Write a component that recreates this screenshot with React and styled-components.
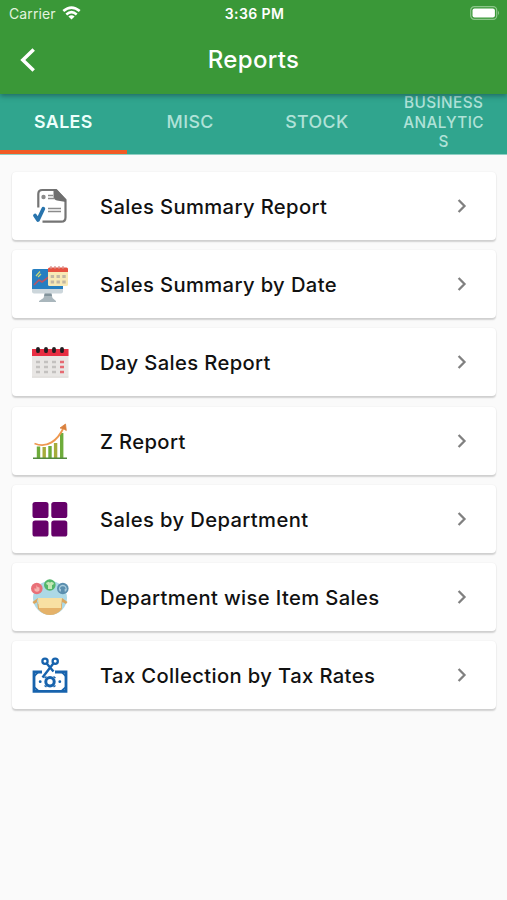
import React from 'react'
import styled, { createGlobalStyle } from 'styled-components'

const colors = {
	green: '#3a9838',
	teal: '#30a58e',
	orange: '#f15a24',
	page: '#fafafa',
	text: '#111111',
	grey: '#808080',
}

const GlobalStyle = createGlobalStyle`
	* {
		box-sizing: border-box;
	}
	body {
		margin: 0;
		background: ${colors.page};
		font-family: Inter, 'Liberation Sans', sans-serif;
	}
`

const Screen = styled.div`
	width: 507px;
	height: 900px;
	overflow: hidden;
	background: ${colors.page};
`
const Header = styled.header`
	position: relative;
	z-index: 1;
	height: 94px;
	background: ${colors.green};
	box-shadow: 0 2px 5px rgba(20, 60, 70, 0.55);
`
const StatusBar = styled.div`
	display: grid;
	grid-template-columns: 1fr auto 1fr;
	align-items: center;
	height: 26px;
	padding: 0 7px 0 9px;
	color: #ffffff;
`
const Carrier = styled.div`
	display: flex;
	align-items: center;
	gap: 6px;
	font-size: 14px;
	letter-spacing: 0.1px;
	color: #e2f3df;
`
const Clock = styled.div`
	padding-top: 1px;
	font-size: 14px;
	font-weight: 600;
	letter-spacing: 0.4px;
`
const BatteryIcon = styled.svg`
	justify-self: end;
`
const TitleBar = styled.div`
	display: grid;
	grid-template-columns: 60px 1fr 60px;
	align-items: center;
	height: 67px;
`
const BackButton = styled.button`
	display: flex;
	padding: 0 0 0 18px;
	border: 0;
	background: none;
`
const Title = styled.h1`
	margin: 0;
	font-size: 24px;
	font-weight: 500;
	letter-spacing: 0.3px;
	text-align: center;
	color: #ffffff;
`

const Tabs = styled.nav`
	display: grid;
	grid-template-columns: repeat(4, 1fr);
	grid-template-rows: 60px;
	height: 61px;
	background: ${colors.teal};
	border-bottom: 1px solid #8fcfc3;
`
const Tab = styled.div`
	display: flex;
	align-items: center;
	justify-content: center;
	padding: ${props => props.$small ? '1px 22px 0' : '0'};
	border-bottom: 4px solid ${props => props.$active ? colors.orange : 'transparent'};
	font-size: ${props => props.$small ? '15.3px' : '17.8px'};
	font-weight: ${props => props.$active ? 600 : 500};
	line-height: 19.5px;
	letter-spacing: 0.4px;
	text-align: center;
	overflow-wrap: anywhere;
	color: ${props => props.$active ? '#ecfffb' : '#b0e2d8'};
`

const List = styled.main`
	display: flex;
	flex-direction: column;
	gap: 10.2px;
	padding: 17px 11px 0 12px;
`
const Card = styled.div`
	display: flex;
	align-items: center;
	height: 68px;
	padding: 0 29px 0 8px;
	border-radius: 4px;
	background: #ffffff;
	box-shadow: 0 1.5px 1.5px rgba(0, 0, 0, 0.16), 0 0 2px rgba(0, 0, 0, 0.06);
`
const ReportIcon = styled.svg`
	flex: none;
	width: 60px;
	height: 52px;
`
const Label = styled.span`
	flex: 1;
	padding: 1px 0 0 20px;
	font-size: 20.2px;
	font-weight: 500;
	letter-spacing: 0.38px;
	white-space: nowrap;
	color: ${colors.text};
`

const SummaryIcon = () => (
	<ReportIcon viewBox='0 0 60 52'>
		<path d='M18.3 27.5V14Q18.3 10 22.3 10H36L45.5 20V37.5Q45.5 41.7 41.3 41.7H22.5' fill='none' stroke='#747474' strokeWidth='2.2' />
		<path d='M33.5 9.5H37L46 19.5V22L37 20.5Q33.5 19.5 33.5 16.5Z' fill='#6e6e6e' />
		<circle cx='23.5' cy='17' r='2.2' fill='#8b8b8b' />
		<path d='M28 15.5H33M28 18.5H34.5M28 28.5H41M28 31.5H41' stroke='#8b8b8b' strokeWidth='1.3' />
		<path d='M15 35.5L18 40L23.3 28.8' fill='none' stroke='#2874ad' strokeWidth='3.8' strokeLinecap='round' strokeLinejoin='round' />
	</ReportIcon>
)

const DateIcon = () => (
	<ReportIcon viewBox='0 0 60 52'>
		<path d='M25 34H31L32.5 40L36 43V44H19V43L23.5 40Z' fill='#a9b6bc' />
		<path d='M25 34H31L32 38H24.2Z' fill='#82939b' />
		<rect x='12' y='11' width='31' height='24.5' rx='2' fill='#ccd6db' />
		<path d='M14 11H43V31H12V13Q12 11 14 11Z' fill='#267fc1' />
		<path d='M14 27L19 22L22 24L30 18' fill='none' stroke='#b85465' strokeWidth='1.6' />
		<path d='M16 18L20 13.5M18 19L21 16' stroke='#c9d979' strokeWidth='1.2' />
		<rect x='28' y='10' width='20' height='18' rx='1.5' fill='#f8e9b6' />
		<path d='M28 14V11Q28 9.5 29.5 9.5H46.5Q48 9.5 48 11V14Z' fill='#e65140' />
		<path d='M31 8V11M35 8V11M39 8V11M43 8V11' stroke='#d88d87' strokeWidth='1.2' />
		<path d='M30.7 18.5H46M30.7 24H46' stroke='#c2b7a4' strokeWidth='3' strokeDasharray='3.4 2.4' />
	</ReportIcon>
)

const CalendarIcon = () => (
	<ReportIcon viewBox='0 0 60 52'>
		<rect x='12' y='13' width='36.5' height='28' fill='#e8e6e4' />
		<path d='M12 41.2H48.5' stroke='#d8d5d3' />
		<rect x='12' y='13' width='36.5' height='7' fill='#e72e42' />
		<path d='M18 12.8V15.2M26 12.8V15.2M34 12.8V15.2M42 12.8V15.2' stroke='#211d20' strokeWidth='3.8' strokeLinecap='round' />
		<path d='M16 26H40M16 31H40M16 36H40' stroke='#c3c1bf' strokeWidth='2.6' strokeDasharray='4 4' />
		<path d='M40 26H44M40 31H44M40 36H44' stroke='#e66a72' strokeWidth='2.6' />
	</ReportIcon>
)

const GrowthIcon = () => (
	<ReportIcon viewBox='0 0 60 52'>
		<path d='M18.5 43V31.5M30 43V31M41.7 43V18' stroke='#6eac3b' strokeWidth='3.4' />
		<path d='M24.2 43V32M35.6 43V28' stroke='#a6ac3b' strokeWidth='3.4' />
		<path d='M13 43.2H47' stroke='#53893d' strokeWidth='1.4' />
		<path d='M14.5 28.5C27 33.5 37.5 26 44 12' fill='none' stroke='#ee9850' strokeWidth='1.8' />
		<path d='M40 13L45.5 9L46.3 15.5L43.5 13.7Z' fill='#d9803e' stroke='#d9803e' strokeWidth='0.8' />
	</ReportIcon>
)

const DepartmentIcon = () => (
	<ReportIcon viewBox='0 0 60 52' fill='#650069'>
		<rect x='12.5' y='9' width='16' height='16' rx='2.6' />
		<rect x='31.3' y='9' width='16' height='16' rx='2.6' />
		<rect x='12.5' y='27.5' width='16' height='16' rx='2.6' />
		<rect x='31.3' y='27.5' width='16' height='16' rx='2.6' />
	</ReportIcon>
)

const BasketIcon = () => (
	<ReportIcon viewBox='0 0 60 52'>
		<circle cx='30' cy='27' r='17' fill='#add9e6' />
		<path d='M18 33H42V38Q37 44 30 44Q23 44 18 38Z' fill='#e5b269' />
		<path d='M18 27H42L41 37H19Z' fill='#f8e0a2' />
		<path d='M18 27L12.5 31L14 33L17.5 31L19 38H18L17 30M42 27L47.5 31L46 33L42.5 31L41 38' fill='#dba65d' />
		<circle cx='16.8' cy='17.5' r='5.8' fill='#e97078' />
		<path d='M16.5 14L17.5 16L19.5 16.5V19.5Q17 22 14.5 19.5V17L16.3 18Z' fill='#f5b3af' />
		<circle cx='29.8' cy='14' r='5.8' fill='#52b66b' />
		<path d='M26 12L28.5 10.8Q30 12 31.5 10.8L34 12L33 14L32 13.7V18H28V13.7L27 14Z' fill='#c3e8b5' />
		<circle cx='42.8' cy='17.5' r='5.8' fill='#5b8faf' />
		<path d='M39.5 19.5Q39 14.5 42.8 14.5Q46.5 14.5 46.2 19.5M40.3 18V20.5M45.3 18V20.5' fill='none' stroke='#a7cbdc' strokeWidth='1.3' />
	</ReportIcon>
)

const TaxIcon = () => (
	<ReportIcon viewBox='0 0 60 52' fill='none' stroke='#1763ad'>
		<path d='M22 23H14V42.3H46V23H35' strokeWidth='2.8' />
		<path d='M14 27.5L18.5 23M14 38L18.5 42M46 27.5L41.5 23M46 38L41.5 42' strokeWidth='1.7' />
		<circle cx='30' cy='32.7' r='4.2' strokeWidth='3' />
		<path d='M24.5 29L26.5 27.5M33.5 27.5L35.5 29M24.5 36.5L26.5 38M33.5 38L35.5 36.5' strokeWidth='1.4' />
		<circle cx='20.2' cy='32.7' r='1.4' fill='#1763ad' stroke='none' />
		<circle cx='39.8' cy='32.7' r='1.4' fill='#1763ad' stroke='none' />
		<circle cx='25' cy='12.2' r='2.6' strokeWidth='2.3' />
		<circle cx='35.2' cy='12.2' r='2.6' strokeWidth='2.3' />
		<path d='M33.5 14.2L22.5 28.5M26.5 14.2L33.5 22.5' strokeWidth='2.4' />
	</ReportIcon>
)

const Chevron = () => (
	<svg width='10' height='16' viewBox='0 0 10 16'>
		<path d='M1.6 2L7.5 8L1.6 14' fill='none' stroke={colors.grey} strokeWidth='2.3' />
	</svg>
)

const tabs = [
	{ name: 'SALES', active: true },
	{ name: 'MISC' },
	{ name: 'STOCK' },
	{ name: 'BUSINESS ANALYTICS', small: true },
]

const reports = [
	{ name: 'Sales Summary Report', Icon: SummaryIcon },
	{ name: 'Sales Summary by Date', Icon: DateIcon },
	{ name: 'Day Sales Report', Icon: CalendarIcon },
	{ name: 'Z Report', Icon: GrowthIcon },
	{ name: 'Sales by Department', Icon: DepartmentIcon },
	{ name: 'Department wise Item Sales', Icon: BasketIcon },
	{ name: 'Tax Collection by Tax Rates', Icon: TaxIcon },
]

const App = () => (
	<Screen>
		<GlobalStyle />
		<Header>
			<StatusBar>
				<Carrier>
					Carrier
					<svg width='19' height='14' viewBox='0 0 19 14'>
						<path d='M1.3 5.1Q9.5 -2 17.7 5.1M4.3 8.4Q9.5 4 14.7 8.4' fill='none' stroke='#ffffff' strokeWidth='2.6' />
						<path d='M6.4 10.6Q9.5 8 12.6 10.6L9.5 13.6Z' fill='#ffffff' />
					</svg>
				</Carrier>
				<Clock>3:36 PM</Clock>
				<BatteryIcon width='30' height='14' viewBox='0 0 30 14'>
					<rect x='0.7' y='0.7' width='26' height='12.6' rx='3.6' fill='none' stroke='#8cc68a' strokeWidth='1.2' />
					<rect x='2.5' y='2.5' width='22.4' height='9' rx='2' fill='#ffffff' />
					<path d='M28 4.8Q30 7 28 9.2Z' fill='#8cc68a' />
				</BatteryIcon>
			</StatusBar>
			<TitleBar>
				<BackButton aria-label='Back'>
					<svg width='20' height='26' viewBox='0 0 20 26'>
						<path d='M15.7 2.4L4.8 13L15.7 23.6' fill='none' stroke='#ffffff' strokeWidth='3.5' />
					</svg>
				</BackButton>
				<Title>Reports</Title>
			</TitleBar>
		</Header>
		<Tabs>
			{tabs.map(tab => (
				<Tab key={tab.name} $active={tab.active} $small={tab.small}>{tab.name}</Tab>
			))}
		</Tabs>
		<List>
			{reports.map(({ name, Icon }) => (
				<Card key={name}>
					<Icon />
					<Label>{name}</Label>
					<Chevron />
				</Card>
			))}
		</List>
	</Screen>
)

export default App
